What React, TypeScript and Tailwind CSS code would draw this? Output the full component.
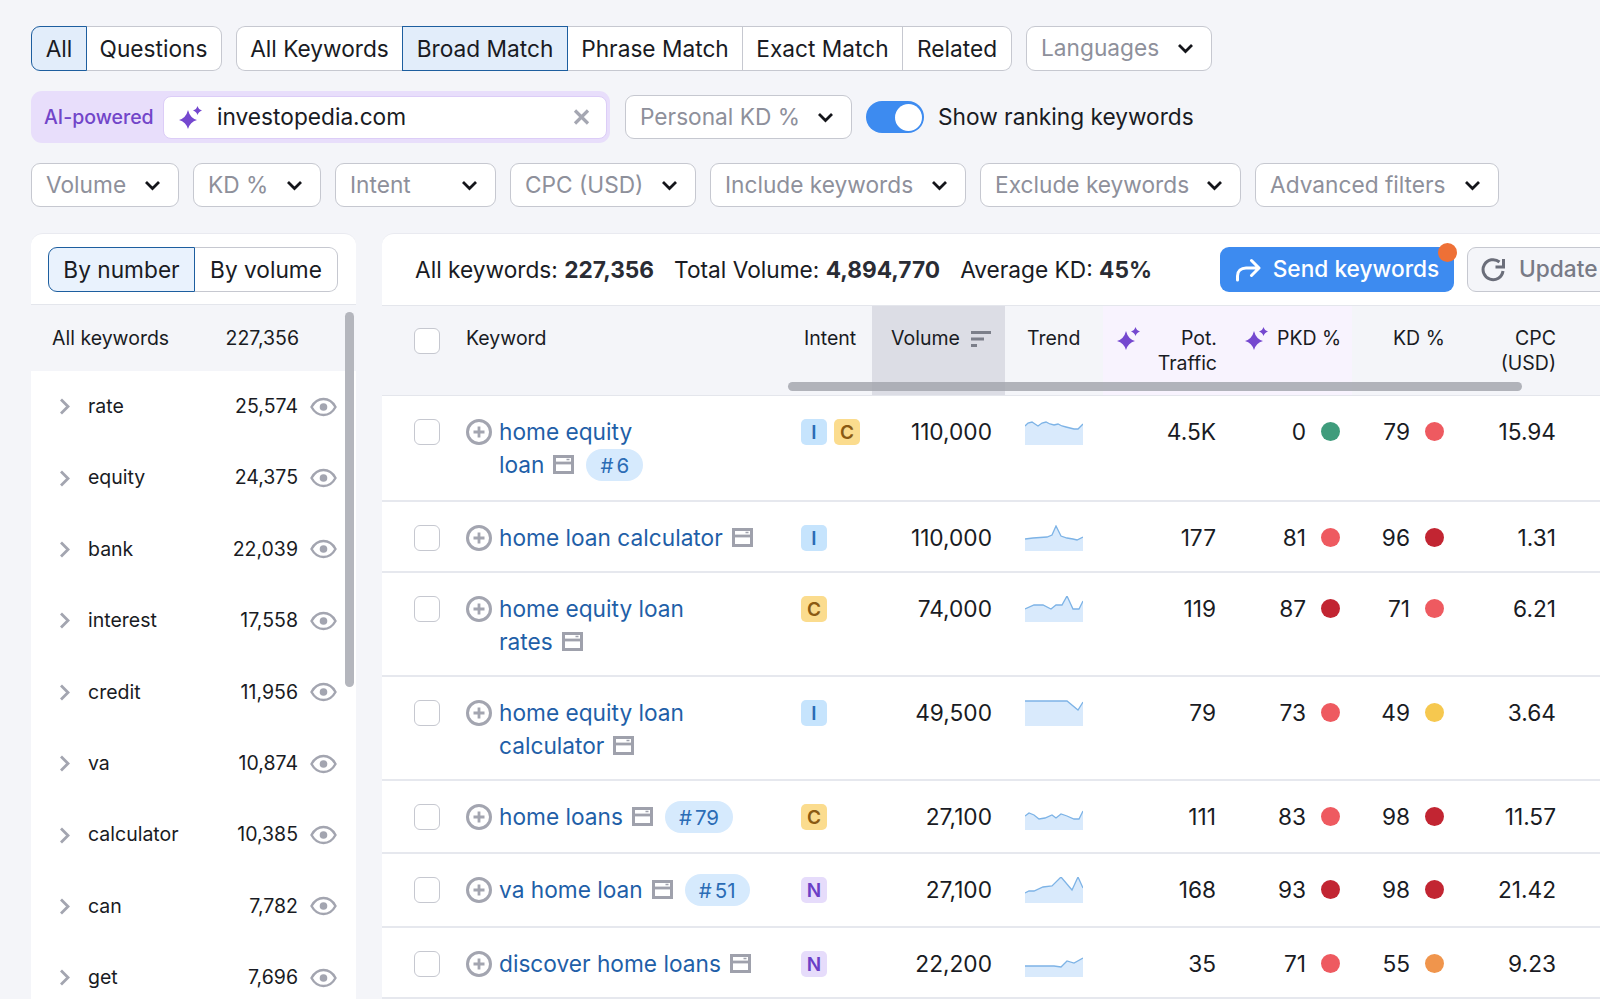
import React from "react";

const Chevron = () => (
  <svg width="17" height="11" viewBox="0 0 17 11" fill="none" className="shrink-0">
    <path d="M2 2l6.500 6.500L15 2" stroke="#14151a" strokeWidth="2.800" />
  </svg>
);

const Sparkle = ({ className = "" }: { className?: string }) => (
  <svg width="24" height="23" viewBox="0 0 24 23" className={className}>
    <path d="M9 4Q11 12 18 14Q11 16 9 23Q7 16 0 14Q7 12 9 4z" fill="#7548cf" />
    <path d="M18.500 0Q19.500 3.500 23 4.500Q19.500 5.500 18.500 9Q17.500 5.500 14 4.500Q17.500 3.500 18.500 0z" fill="#7548cf" />
  </svg>
);

const Eye = () => (
  <svg width="27" height="20" viewBox="0 0 27 20" fill="none" className="shrink-0">
    <path d="M1.500 10C4.500 4.500 8.500 2 13.500 2s9 2.500 12 8c-3 5.500-7 8-12 8s-9-2.500-12-8z" stroke="#a3a5b0" strokeWidth="2.400" />
    <circle cx="13.500" cy="10" r="3.800" fill="#a3a5b0" />
  </svg>
);

const ChevronRight = () => (
  <svg width="12" height="17" viewBox="0 0 12 17" fill="none" className="shrink-0">
    <path d="M2 1.500l7 7-7 7" stroke="#a3a5b0" strokeWidth="2.800" />
  </svg>
);

const PlusCircle = () => (
  <svg width="26" height="26" viewBox="0 0 26 26" fill="none" className="shrink-0 mt-[4.500px]">
    <circle cx="13" cy="13" r="11.500" stroke="#a3a5b0" strokeWidth="3" />
    <path d="M13 7.500v11M7.500 13h11" stroke="#a3a5b0" strokeWidth="2.800" />
  </svg>
);

const WindowIcon = () => (
  <svg width="21" height="19" viewBox="0 0 21 19" fill="none" className="shrink-0 inline-block">
    <rect x="1.500" y="1.500" width="18" height="16" stroke="#9fa1ac" strokeWidth="3" />
    <path d="M1 8h19" stroke="#9fa1ac" strokeWidth="2.800" />
    <path d="M13.500 4.500h3" stroke="#9fa1ac" strokeWidth="1.500" />
  </svg>
);

const Select = ({ label, className }: { label: string; className: string }) => (
  <div className={`h-[44px] flex items-center justify-between pl-[14px] pr-[17px] bg-white border border-[#c6c8d0] rounded-[9px] text-[#8e909b] text-[22.700px] shrink-0 ${className}`}>
    <span>{label}</span>
    <Chevron />
  </div>
);

const Seg = ({ label, className }: { label: string; className: string }) => (
  <div className={`h-[45px] pt-[2px] flex items-center justify-center border text-[22.700px] text-[#191b23] shrink-0 ${className}`}>{label}</div>
);

const idle = "bg-white border-[#c6c8d0]";
const active = "bg-[#e2edfa] border-[#1d5e9f]";

const sideRows = [
  ["rate", "25,574"],
  ["equity", "24,375"],
  ["bank", "22,039"],
  ["interest", "17,558"],
  ["credit", "11,956"],
  ["va", "10,874"],
  ["calculator", "10,385"],
  ["can", "7,782"],
  ["get", "7,696"],
];

const dotLight = "bg-[#ee5a60]";
const dotDark = "bg-[#c22532]";
const dotGreen = "bg-[#3f9c7c]";
const dotYellow = "bg-[#f6c84f]";
const dotOrange = "bg-[#f0954c]";

type Row = {
  lines: string[];
  rank?: string;
  chips: string[];
  volume: string;
  spark: string;
  pot: string;
  pkd: string;
  pkdDot: string;
  kd: string;
  kdDot: string;
  cpc: string;
  height: string;
};

const rows: Row[] = [
  { lines: ["home equity", "loan"], rank: "6", chips: ["I", "C"], volume: "110,000", spark: "0,7 3,4 7,3 10,5 13,7 17,4 21,3 25,5 29,6 33,5 37,7 41,8 45,9 49,10 53,10 58,5", pot: "4.5K", pkd: "0", pkdDot: dotGreen, kd: "79", kdDot: dotLight, cpc: "15.94", height: "h-[106px]" },
  { lines: ["home loan calculator"], chips: ["I"], volume: "110,000", spark: "0,14 8,13 22,12 27,10 31,1 36,11 42,13 48,14 52,15 58,12", pot: "177", pkd: "81", pkdDot: dotLight, kd: "96", kdDot: dotDark, cpc: "1.31", height: "h-[71px]" },
  { lines: ["home equity loan", "rates"], chips: ["C"], volume: "74,000", spark: "0,13 9,9 18,9 26,13 31,9 37,9 42,0 48,13 54,13 58,5", pot: "119", pkd: "87", pkdDot: dotDark, kd: "71", kdDot: dotLight, cpc: "6.21", height: "h-[104px]" },
  { lines: ["home equity loan", "calculator"], chips: ["I"], volume: "49,500", spark: "0,1 42,1 53,10 58,2", pot: "79", pkd: "73", pkdDot: dotLight, kd: "49", kdDot: dotYellow, cpc: "3.64", height: "h-[104px]" },
  { lines: ["home loans"], rank: "79", chips: ["C"], volume: "27,100", spark: "0,12 4,9 9,11 14,15 20,14 27,11 31,14 36,10 42,12 49,15 54,15 58,7", pot: "111", pkd: "83", pkdDot: dotLight, kd: "98", kdDot: dotDark, cpc: "11.57", height: "h-[73px]" },
  { lines: ["va home loan"], rank: "51", chips: ["N"], volume: "27,100", spark: "0,16 4,14 9,14 18,10 27,9 36,0 47,13 53,0 58,11", pot: "168", pkd: "93", pkdDot: dotDark, kd: "98", kdDot: dotDark, cpc: "21.42", height: "h-[74px]" },
  { lines: ["discover home loans"], chips: ["N"], volume: "22,200", spark: "0,15 29,15 36,16 42,10 49,12 58,7", pot: "35", pkd: "71", pkdDot: dotLight, kd: "55", kdDot: dotOrange, cpc: "9.23", height: "h-[71px]" },
];

const chipStyles: Record<string, string> = {
  I: "bg-[#c6e4fd] text-[#2b6cb5]",
  C: "bg-[#fbdc8e] text-[#8a5a13]",
  N: "bg-[#e6dcfb] text-[#6b3fc6]",
};

const Spark = ({ points }: { points: string }) => (
  <svg width="58" height="26" viewBox="0 0 58 26" className="block">
    <polygon points={`0,26 ${points} 58,26`} fill="#d9eafc" />
    <polyline points={points} fill="none" stroke="#7db3e6" strokeWidth="1.300" />
  </svg>
);

const Checkbox = () => <div className="w-[26px] h-[26px] bg-white border border-[#c6c8d0] rounded-[6px]" />;

const gridCols = "grid grid-cols-[70px_349px_71px_133px_98px_127px_122px_106px_111px]";

export default function App() {
  return (
    <div className="w-[1600px] h-[999px] overflow-hidden bg-[#f4f5f9] text-[#191b23] [font-family:Inter,sans-serif] pl-[31px] pt-[26px]">
      <div className="flex items-center">
        <Seg label="All" className={`w-[56px] rounded-l-[9px] relative ${active}`} />
        <Seg label="Questions" className={`w-[136px] -ml-px rounded-r-[9px] ${idle} border-l-0`} />
        <Seg label="All Keywords" className={`w-[166px] ml-[14px] rounded-l-[9px] ${idle} border-r-0`} />
        <Seg label="Broad Match" className={`w-[166px] ${active}`} />
        <Seg label="Phrase Match" className={`w-[175px] ${idle} border-l-0`} />
        <Seg label="Exact Match" className={`w-[160px] ${idle} border-l-0`} />
        <Seg label="Related" className={`w-[109px] rounded-r-[9px] ${idle} border-l-0`} />
        <Select label="Languages" className="w-[186px] ml-[14px] h-[45px]" />
      </div>

      <div className="flex items-center mt-[20px] h-[52px]">
        <div className="w-[579px] h-[52px] flex items-center pl-[13px] pr-[3px] rounded-[11px] bg-[#e8defb] shrink-0">
          <span className="text-[19.500px] pt-[1px] font-medium text-[#7245c9] w-[119px] shrink-0">AI-powered</span>
          <div className="flex-1 h-[43px] flex items-center bg-white rounded-[8px] border border-[#dccdf7] pl-[15px] pr-[16px]">
            <Sparkle />
            <span className="ml-[14px] text-[22.700px]">investopedia.com</span>
            <svg width="17" height="16" viewBox="0 0 17 16" fill="none" className="ml-auto">
              <path d="M2 1.500l13 13M15 1.500l-13 13" stroke="#a5a7b2" strokeWidth="3.200" />
            </svg>
          </div>
        </div>
        <Select label="Personal KD %" className="w-[227px] ml-[15px]" />
        <div className="w-[58px] h-[32px] ml-[14px] rounded-full bg-[#3d8bf0] flex items-center justify-end pr-[2px] shrink-0">
          <div className="w-[27px] h-[27px] rounded-full bg-white" />
        </div>
        <span className="ml-[14px] text-[22.700px]">Show ranking keywords</span>
      </div>

      <div className="flex items-center gap-[14px] mt-[20px]">
        <Select label="Volume" className="w-[148px]" />
        <Select label="KD %" className="w-[128px]" />
        <Select label="Intent" className="w-[161px]" />
        <Select label="CPC (USD)" className="w-[186px]" />
        <Select label="Include keywords" className="w-[256px]" />
        <Select label="Exclude keywords" className="w-[261px]" />
        <Select label="Advanced filters" className="w-[244px]" />
      </div>

      <div className="flex items-start gap-[26px] mt-[26px]">
        <div className="relative w-[325px] shrink-0 bg-white rounded-t-[12px] border-t border-[#e9eaf0]">
          <div className="h-[71px] pl-[17px] pt-[13px] border-b border-[#e4e6ec]">
            <div className="flex text-[22.700px]">
              <div className="w-[147px] h-[45px] pt-[2px] flex items-center justify-center rounded-l-[9px] border border-[#1d5e9f] bg-[#e9f2fd]">By number</div>
              <div className="w-[143px] h-[45px] pt-[2px] flex items-center justify-center rounded-r-[9px] border border-l-0 border-[#c6c8d0]">By volume</div>
            </div>
          </div>
          <div className="h-[66px] pt-[2px] bg-[#f4f5f9] flex items-center pl-[21px] pr-[57px] text-[19.500px]">
            <span>All keywords</span>
            <span className="ml-auto">227,356</span>
          </div>
          {sideRows.map(([name, count]) => (
            <div key={name} className="h-[71.400px] flex items-center pl-[28px] pr-[19px] text-[19.500px]">
              <ChevronRight />
              <span className="ml-[17px]">{name}</span>
              <span className="ml-auto">{count}</span>
              <span className="ml-[12px]"><Eye /></span>
            </div>
          ))}
          <div className="absolute left-[314px] top-[78px] w-[9px] h-[375px] rounded-full bg-[#b4b6bd]" />
        </div>

        <div className="relative w-[1250px] shrink-0 bg-white rounded-t-[12px] border-t border-[#e9eaf0]">
          <div className="h-[71px] flex items-center pl-[33px] text-[22.700px]">
            <span className="pt-[2px]">All keywords: <b className="font-bold text-[#2a2c34]">227,356</b></span>
            <span className="pt-[2px] ml-[20px]">Total Volume: <b className="font-bold text-[#2a2c34]">4,894,770</b></span>
            <span className="pt-[2px] ml-[20px]">Average KD: <b className="font-bold text-[#2a2c34]">45%</b></span>
            <div className="relative w-[234px] h-[45px] ml-[68px] flex items-center justify-center gap-[12px] rounded-[9px] bg-[#3d8bf0] text-white font-medium shrink-0">
              <svg width="26" height="24" viewBox="0 0 26 24" fill="none">
                <path d="M2.500 22v-4c0-5 3.500-8 8.500-8h12M16.500 2.500l7.500 7.500-7.500 7.500" stroke="#ffffff" strokeWidth="3" strokeLinecap="round" strokeLinejoin="round" />
              </svg>
              <span>Send keywords</span>
              <div className="absolute -right-[3px] -top-[4px] w-[19px] h-[19px] rounded-full bg-[#ee7036]" />
            </div>
            <div className="w-[160px] h-[45px] ml-[13px] flex items-center gap-[13px] pl-[13px] rounded-[9px] bg-[#f4f5f9] border border-[#c6c8d0] text-[#787a86] font-medium shrink-0">
              <svg width="25" height="25" viewBox="0 0 25 25" fill="none">
                <path d="M22 14a10 10 0 1 1-3.500-9" stroke="#6b6e7a" strokeWidth="3" />
                <path d="M22.500 2v8h-8" stroke="#6b6e7a" strokeWidth="3" />
              </svg>
              <span>Update</span>
            </div>
          </div>

          <div className={`${gridCols} relative h-[91px] bg-[#f4f5f9] border-y border-[#e4e6ec] text-[19.500px] leading-[25px]`}>
            <div className="pl-[32px] pt-[22px]"><Checkbox /></div>
            <div className="pl-[14px] pt-[20px]">Keyword</div>
            <div className="pl-[3px] pt-[20px]">Intent</div>
            <div className="flex items-start gap-[11px] pl-[19px] pt-[20px] bg-[#dcdde5]">
              <span>Volume</span>
              <svg width="20" height="16" viewBox="0 0 20 16" className="mt-[5px] shrink-0">
                <path d="M0 0h20v3H0zM0 6.500h13v3H0zM0 13h6v3H0z" fill="#7c7f8a" />
              </svg>
            </div>
            <div className="pl-[22px] pt-[20px]">Trend</div>
            <div className="relative bg-[#f8f3fe] pr-[13px] pt-[20px] text-right">
              <Sparkle className="absolute left-[14px] top-[21px]" />
              <div>Pot.</div>
              <div>Traffic</div>
            </div>
            <div className="flex items-start bg-[#f8f3fe] pl-[15px] pt-[20px]">
              <Sparkle className="mt-[1px] shrink-0" />
              <span className="ml-[8px]">PKD %</span>
            </div>
            <div className="pl-[41px] pt-[20px]">KD %</div>
            <div className="pr-[13px] pt-[20px] text-right">
              <div>CPC</div>
              <div>(USD)</div>
            </div>
            <div className="absolute left-[406px] top-[76px] w-[734px] h-[9px] rounded-full bg-[#a5a7af]/85" />
          </div>

          {rows.map((r) => (
            <div key={r.lines.join(" ")} className={`${gridCols} ${r.height} border-b-2 border-[#e6e8ee] text-[22.700px] leading-[33px]`}>
              <div className="pl-[32px] pt-[23px]"><Checkbox /></div>
              <div className="flex items-start gap-[7px] pl-[14px] pt-[18.500px]">
                <PlusCircle />
                <div className="text-[#1f5fa8]">
                  {r.lines.map((line, i) => (
                    <div key={line} className="flex items-center h-[33px]">
                      <span>{line}</span>
                      {i === r.lines.length - 1 && (
                        <>
                          <span className="ml-[9px] flex"><WindowIcon /></span>
                          {r.rank && (
                            <span className="ml-[12px] h-[32px] mt-[2px] px-[14px] flex items-center rounded-full bg-[#d6eafd] text-[#2b6cb5] text-[20.500px]"><span className="mr-[3px]">#</span>{r.rank}</span>
                          )}
                        </>
                      )}
                    </div>
                  ))}
                </div>
              </div>
              <div className="flex items-start gap-[7px] pt-[23px]">
                {r.chips.map((c) => (
                  <div key={c} className={`w-[26px] h-[26px] flex items-center justify-center rounded-[5px] text-[19px] font-semibold leading-none ${chipStyles[c]}`}>{c}</div>
                ))}
              </div>
              <div className="pr-[13px] pt-[18.500px] text-right">{r.volume}</div>
              <div className="pl-[20px] pt-[23px]"><Spark points={r.spark} /></div>
              <div className="pr-[14px] pt-[18.500px] text-right">{r.pot}</div>
              <div className="flex items-center justify-end gap-[15px] pr-[12px] pt-[18.500px] h-[51.500px]">
                <span>{r.pkd}</span>
                <div className={`w-[19px] h-[19px] rounded-full ${r.pkdDot}`} />
              </div>
              <div className="flex items-center justify-end gap-[15px] pr-[14px] pt-[18.500px] h-[51.500px]">
                <span>{r.kd}</span>
                <div className={`w-[19px] h-[19px] rounded-full ${r.kdDot}`} />
              </div>
              <div className="pr-[13px] pt-[18.500px] text-right">{r.cpc}</div>
            </div>
          ))}
        </div>
      </div>
    </div>
  );
}
